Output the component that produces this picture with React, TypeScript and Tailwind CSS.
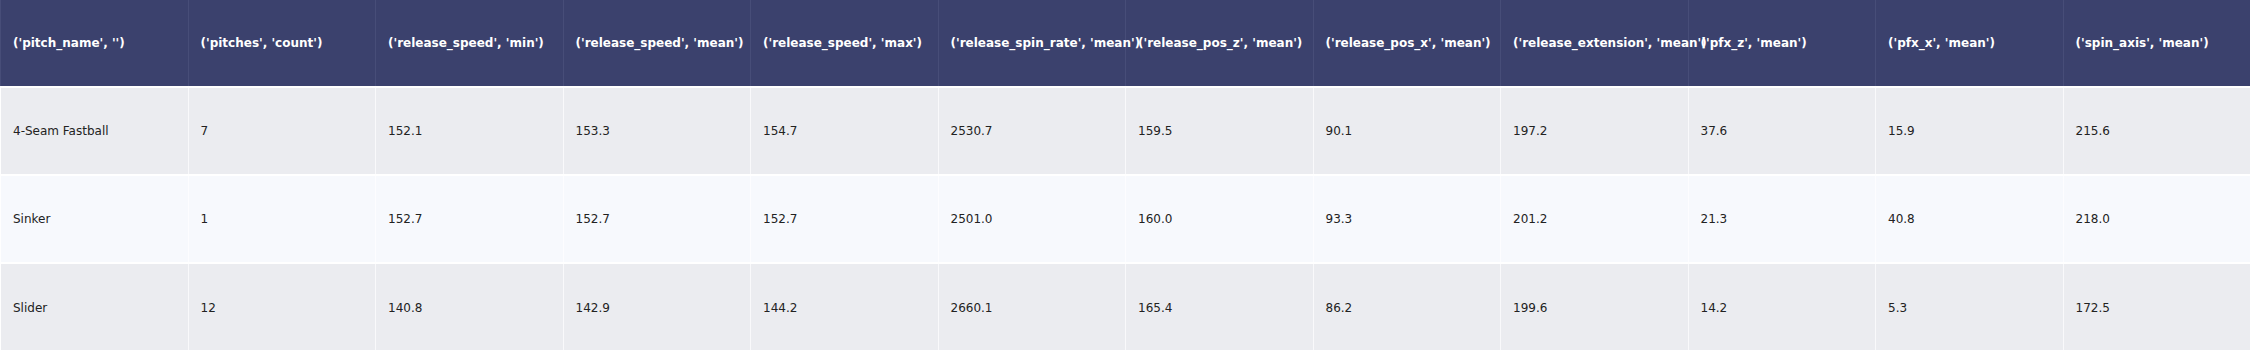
const columns = [
  "('pitch_name', '')",
  "('pitches', 'count')",
  "('release_speed', 'min')",
  "('release_speed', 'mean')",
  "('release_speed', 'max')",
  "('release_spin_rate', 'mean')",
  "('release_pos_z', 'mean')",
  "('release_pos_x', 'mean')",
  "('release_extension', 'mean')",
  "('pfx_z', 'mean')",
  "('pfx_x', 'mean')",
  "('spin_axis', 'mean')",
];

const rows = [
  ['4-Seam Fastball', '7', '152.1', '153.3', '154.7', '2530.7', '159.5', '90.1', '197.2', '37.6', '15.9', '215.6'],
  ['Sinker', '1', '152.7', '152.7', '152.7', '2501.0', '160.0', '93.3', '201.2', '21.3', '40.8', '218.0'],
  ['Slider', '12', '140.8', '142.9', '144.2', '2660.1', '165.4', '86.2', '199.6', '14.2', '5.3', '172.5'],
];

export default function App() {
  return (
    <div className="w-[2250px] h-[350px] bg-white font-['DejaVu_Sans',Verdana,sans-serif] text-[12px]">
      <table className="table-fixed w-full border-collapse">
        <thead>
          <tr className="h-[87px] bg-[#3b416d]">
            {columns.map((c) => (
              <th
                key={c}
                className="w-[187.5px] px-3 text-left font-bold text-white whitespace-nowrap overflow-visible border-x border-[#474d78]"
              >
                {c}
              </th>
            ))}
          </tr>
        </thead>
        <tbody>
          {rows.map((r, i) => (
            <tr
              key={r[0]}
              className={`h-[88px] border-t-2 border-white ${i % 2 === 0 ? 'bg-[#ebecf0]' : 'bg-[#f7f9fd]'}`}
            >
              {r.map((v, j) => (
                <td
                  key={j}
                  className="px-3 text-left text-[#222222] whitespace-nowrap border-x border-white/70"
                >
                  {v}
                </td>
              ))}
            </tr>
          ))}
        </tbody>
      </table>
    </div>
  );
}
